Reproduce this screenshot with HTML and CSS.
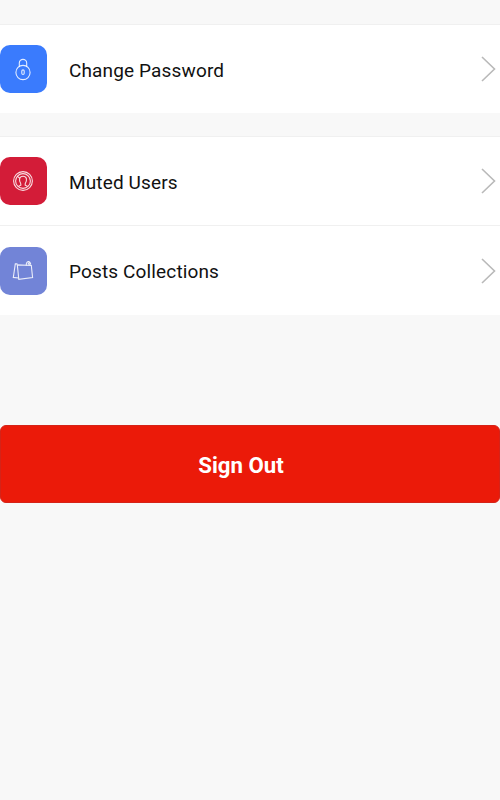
FILE: index.html
```
<!DOCTYPE html>
<html lang="en">
  <head>
    <meta charset="utf-8">
    <title>Settings</title>
    <link rel="stylesheet" href="styles.css">
  </head>
  <body>
    <ul class="menu">
      <li class="row">
        <svg class="tile blue" viewBox="0 0 47 47">
          <path d="M19.3 21.3v-3.7a3.7 3.7 0 0 1 7.4 0v3.7" />
          <circle cx="23" cy="27" r="7.1" />
          <rect x="21.8" y="24.4" width="2.4" height="4.6" rx="1.2" />
        </svg>
        <span>Change Password</span>
        <svg class="chevron" viewBox="0 0 15 26"><path d="M1 1l12.5 12L1 25" /></svg>
      </li>
    </ul>

    <ul class="menu">
      <li class="row">
        <svg class="tile red" viewBox="0 0 47 47">
          <circle cx="23" cy="23.5" r="9.4" />
          <circle cx="23" cy="23.5" r="7.4" />
          <path d="M20.8 26.2c-2.2-3.6-1.7-7.4 2.2-7.4s4.4 3.8 2.2 7.4v1.5l2.2 1M20.8 26.2v1.5l-2.2 1M17.3 18.6l2.5 2.2" />
        </svg>
        <span>Muted Users</span>
        <svg class="chevron" viewBox="0 0 15 26"><path d="M1 1l12.5 12L1 25" /></svg>
      </li>
      <li class="row">
        <svg class="tile purple" viewBox="0 0 47 47">
          <path d="M17.3 17.4l14 .6 1.3 12.1-13.8 1.8z" />
          <path d="M17.5 16.4l-2.2-.1-2 13.6 5.3.6" />
          <path d="M26.3 18c-.7-4.8 4.4-5.2 4.4-.8M27.8 16.8l1.2-1.4.4 2.3" />
        </svg>
        <span>Posts Collections</span>
        <svg class="chevron" viewBox="0 0 15 26"><path d="M1 1l12.5 12L1 25" /></svg>
      </li>
    </ul>

    <button class="sign-out">Sign Out</button>
  </body>
</html>
```
FILE: styles.css
```
body {
  margin: 0;
  padding-top: 24px;
  background-color: #f8f8f8;
  color: #111;
  font-family: Roboto, sans-serif;
  font-size: 19px;
}

.menu {
  list-style: none;
  margin: 0 0 23px;
  padding: 0;
  background-color: #fff;
  border-top: 1px solid #f0f0f0;
}

.row {
  display: flex;
  align-items: center;
  box-sizing: border-box;
  height: 88px;
  padding-right: 4px;

  & + .row {
    height: 90px;
    border-top: 1px solid #f0f0f0;
  }

  span {
    flex: 1;
    margin-left: 22px;
    padding-top: 2px;
    letter-spacing: 0.14px;
  }
}

.tile {
  width: 47px;
  height: 48px;
  border-radius: 10px;
  fill: none;
  stroke: #fff;
  stroke-width: 1.1;
  stroke-opacity: 0.85;
}

.blue {
  background-color: #3a7bfd;
}

.red {
  background-color: #d31c38;
}

.purple {
  background-color: #7284d7;
}

.chevron {
  width: 15px;
  height: 26px;
  fill: none;
  stroke: #b9b9b9;
  stroke-width: 1.6;
}

.sign-out {
  display: block;
  width: 100%;
  height: 78px;
  margin-top: 110px;
  padding: 1px 18px 0 0;
  background-color: #eb1a09;
  border: 1px solid #d52318;
  border-radius: 6px;
  color: #fff;
  font-family: inherit;
  font-size: 22.2px;
  font-weight: bold;
}
```
